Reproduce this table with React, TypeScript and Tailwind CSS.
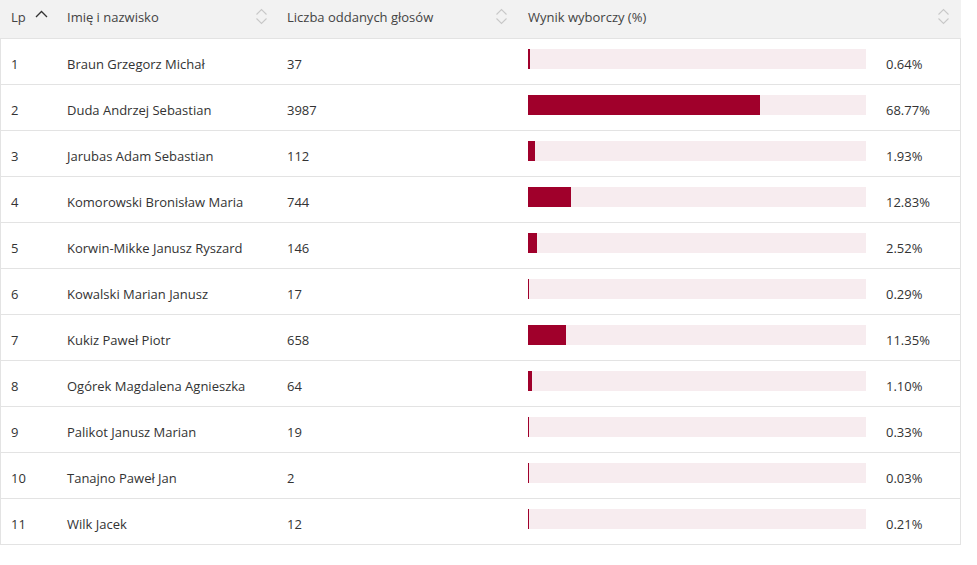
import React from "react";

const rows = [
  [1, "Braun Grzegorz Michał", "37", 0.64],
  [2, "Duda Andrzej Sebastian", "3987", 68.77],
  [3, "Jarubas Adam Sebastian", "112", 1.93],
  [4, "Komorowski Bronisław Maria", "744", 12.83],
  [5, "Korwin-Mikke Janusz Ryszard", "146", 2.52],
  [6, "Kowalski Marian Janusz", "17", 0.29],
  [7, "Kukiz Paweł Piotr", "658", 11.35],
  [8, "Ogórek Magdalena Agnieszka", "64", 1.1],
  [9, "Palikot Janusz Marian", "19", 0.33],
  [10, "Tanajno Paweł Jan", "2", 0.03],
  [11, "Wilk Jacek", "12", 0.21],
] as const;

function SortBoth() {
  return (
    <svg width="13" height="17" viewBox="0 0 13 17" fill="none" stroke="#c8c8c8" strokeWidth="1.1">
      <path d="M1.5 6.5 L6.5 1.5 L11.5 6.5" />
      <path d="M1.5 10.5 L6.5 15.5 L11.5 10.5" />
    </svg>
  );
}

function SortUp() {
  return (
    <svg width="13" height="8" viewBox="0 0 13 8" fill="none" stroke="#333" strokeWidth="1.3">
      <path d="M1 7 L6.5 1.5 L12 7" />
    </svg>
  );
}

export default function App() {
  return (
    <div
      className="w-[961px] bg-white text-[13px] text-[#333]"
      style={{ fontFamily: '"Open Sans", "Liberation Sans", sans-serif' }}
    >
      <div className="grid grid-cols-[56px_220px_241px_1fr] h-[39px] bg-[#f2f2f2] border-b border-[#e3e3e3] text-[#444]">
        <div className="flex items-center pl-[11px] gap-[9px] pb-[2px]">
          <span>Lp</span>
          <span className="mb-[8px]">
            <SortUp />
          </span>
        </div>
        <div className="flex items-center justify-between pl-[11px] pr-[8px] pb-[2px]">
          <span>Imię i nazwisko</span>
          <span className="mt-[-3px]"><SortBoth /></span>
        </div>
        <div className="flex items-center justify-between pl-[11px] pr-[9px] pb-[2px]">
          <span>Liczba oddanych głosów</span>
          <span className="mt-[-3px]"><SortBoth /></span>
        </div>
        <div className="flex items-center justify-between pl-[11px] pr-[11px] pb-[2px]">
          <span>Wynik wyborczy (%)</span>
          <span className="mt-[-3px]"><SortBoth /></span>
        </div>
      </div>
      <div className="border-x border-[#e3e3e3]">
        {rows.map(([lp, name, votes, pct]) => (
          <div
            key={lp}
            className="grid grid-cols-[55px_220px_241px_1fr] h-[46px] border-b border-[#e3e3e3]"
          >
            <div className="pl-[10px] pt-[16px] leading-[18px]">{lp}</div>
            <div className="pl-[11px] pt-[16px] leading-[18px]">{name}</div>
            <div className="pl-[11px] pt-[16px] leading-[18px]">{votes}</div>
            <div className="flex items-start pl-[11px]">
              <div className="mt-[10px] h-[20px] w-[338px] bg-[#f7ecef]">
                <div
                  className="h-full bg-[#a0002b]"
                  style={{ width: `${Math.max(pct, 0.3)}%` }}
                />
              </div>
              <div className="pl-[20px] pt-[16px] leading-[18px]">
                {pct.toFixed(2)}%
              </div>
            </div>
          </div>
        ))}
      </div>
    </div>
  );
}
